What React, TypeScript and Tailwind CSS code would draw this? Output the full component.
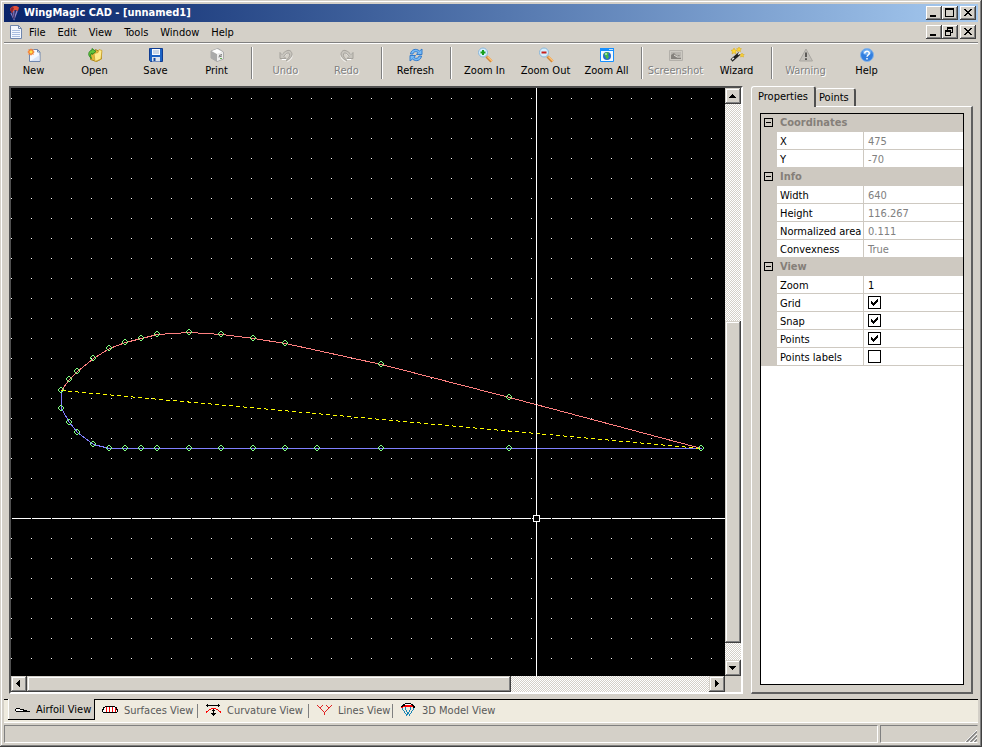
import React, { useState } from "react";
import clsx from "clsx";

type IconProps = { children: React.ReactNode; crisp?: boolean };

const Pic = ({ children, crisp }: IconProps) => (
  <svg
    width="16"
    height="16"
    viewBox="0 0 16 16"
    fill="none"
    shapeRendering={crisp ? "crispEdges" : "auto"}
    aria-hidden="true"
    className="shrink-0"
  >
    {children}
  </svg>
);

const UndoArrow = () => (
  <>
    <path d="M3 5v6.500h6.500M3.500 11C6 6 11 3 12.500 6.500S11 12 8.500 13.500" stroke="#fff" strokeWidth="1" transform="translate(1 1)" />
    <path d="M2 5.500v6h6l-2-2C8 6 11 5 11.500 7S11 11 8 13.500C14 11.500 15 7 13 4.500S7 4 4 7.500z" fill="#c8c5be" stroke="#a5a29c" strokeWidth="1" />
  </>
);

const Lens = ({ color, plus }: { color: string; plus?: boolean }) => (
  <Pic>
    <path d="M9.500 9.500l5 5" stroke="#d08838" strokeWidth="3" />
    <path d="M10.500 9.500l4.500 4.500" stroke="#ffc278" strokeWidth="1.500" />
    <circle cx="6" cy="5.500" r="4.500" fill="#d5efff" stroke="#8ab6d8" />
    <path d="M3.500 5.500h5" stroke={color} strokeWidth="2" />
    {plus && <path d="M6 3v5" stroke={color} strokeWidth="2" />}
  </Pic>
);

const icons = {
  new: (
    <Pic>
      <path d="M3.500 2.500h8l2.500 2.500v9.500H3.500z" fill="#f6f9ff" stroke="#6f86ad" />
      <path d="M11.500 2.500V5H14" stroke="#6f86ad" />
      <path d="M4.500 14L13.500 14V8z" fill="#dbe5f7" />
      <path d="M2 2l2 .8L5 1l1 1.800L8 2l-.7 2L9 5l-1.700 1L8 8l-2-.8L5 9 4 7.200 2 8l.7-2L1 5l1.700-1z" fill="#f8a060" />
      <circle cx="5" cy="5" r="2.200" fill="#ffe04a" stroke="#f06828" />
    </Pic>
  ),
  open: (
    <Pic>
      <path d="M3.500 4.500h4l1-2 3 1.500h3v8l-5 2.500-6-2z" fill="#e2b93a" stroke="#a58420" />
      <path d="M7 6.500l4-1 1-3 3 1-1 8.500-6 2.500z" fill="#ffec8c" stroke="#c9a02d" strokeWidth=".8" />
      <path d="M4.500 11.500C.5 9 1 4 5 3V1.500l4 3-4 3V6c-2 1-1.500 3-.5 5.500z" fill="#62c33b" stroke="#23801e" strokeWidth=".8" />
    </Pic>
  ),
  save: (
    <Pic>
      <path d="M1.500 1.500h13v13h-12l-1-1z" fill="#1b63c5" stroke="#103c91" />
      <path d="M4 2h8v6H4z" fill="#f8fbff" />
      <path d="M5 4h6M5 6h6" stroke="#9ab2cf" />
      <path d="M4 10h8v4.500H4z" fill="#dce4ee" />
      <path d="M5.500 11h2v3h-2z" fill="#174a9c" />
    </Pic>
  ),
  print: (
    <Pic>
      <path d="M2 4l7-2.500L14.500 5v7L8 14.500 2 11z" fill="#d7d7d7" stroke="#aaa" />
      <path d="M2 4l6 3v7.500L2 11z" fill="#aaa" />
      <path d="M3 4l5-2 5.500 3L8 7z" fill="#fff" />
      <path d="M8 7l6-2v6.500L8 14z" fill="#eee" />
      <path d="M10 8.500l3-1M9.500 10l3.500-1" stroke="#777" />
      <path d="M11 11.500h2" stroke="#61b050" />
    </Pic>
  ),
  undo: (
    <Pic>
      <UndoArrow />
    </Pic>
  ),
  redo: (
    <Pic>
      <g transform="translate(16 0) scale(-1 1)">
        <UndoArrow />
      </g>
    </Pic>
  ),
  refresh: (
    <Pic>
      <path d="M2.500 7C3 2.500 8 .8 11.500 4L14 2v5.500H8.500l1.500-2C8 4 5.500 4.500 5 7z" fill="#77baf5" stroke="#2874c9" strokeWidth=".9" />
      <path d="M13.500 9c-.5 4.500-5.500 6.200-9 3L2 14V8.500h5.500L6 10.500c2 1.500 4.500 1 5-1.500z" fill="#77baf5" stroke="#2874c9" strokeWidth=".9" />
    </Pic>
  ),
  zoomIn: <Lens color="#18a01c" plus />,
  zoomOut: <Lens color="#c8201c" />,
  zoomAll: (
    <Pic>
      <path d="M1.500 1.500h13v13h-13z" fill="#f5fbff" stroke="#168fff" />
      <path d="M1 1h14v3H1z" fill="#168fff" />
      <path d="M10 2.500h4" stroke="#b9e0ff" />
      <circle cx="8" cy="9" r="4" fill="#2869cc" />
      <path d="M5 7c1-2 4-2.500 5-1L9 8l1 2-2 2.500L6.500 10z" fill="#45b84a" />
      <circle cx="7" cy="7" r="1" fill="#b9efb5" />
    </Pic>
  ),
  screenshot: (
    <Pic>
      <path d="M1.500 3.500h13v10h-13z" fill="#ccc9c2" stroke="#b3b0aa" />
      <path d="M3 5h10v7H3z" fill="#b9b6b0" />
      <path d="M3 12V8l3-2 3 3 2-1 2 2v2z" fill="#85827d" />
      <path d="M6 8l3 2h4" stroke="#e5e2dc" />
    </Pic>
  ),
  wizard: (
    <Pic>
      <path d="M2.500 13.500l8-7" stroke="#202020" strokeWidth="3" />
      <path d="M3 12.500l2-1.500M9 7.500l2-1.500" stroke="#eee" strokeWidth="1.500" />
      <path d="M5 1l1 2 2 .3-1.500 1.400L7 7 5 5.800 3 7l.5-2.300L2 3.300 4 3zM10 0l.8 1.500 1.700.3-1.300 1.200.3 1.700L10 3.800l-1.500.9.3-1.700-1.300-1.200 1.700-.3zM13 6l.7 1.400 1.500.2-1 1 .3 1.500-1.500-.8-1.400.8.3-1.500-1-1 1.400-.2z" fill="#ffd72f" stroke="#d6a714" strokeWidth=".5" />
    </Pic>
  ),
  warning: (
    <Pic>
      <path d="M8 2l6.500 12h-13z" fill="#c4c1bb" stroke="#aaa7a1" strokeLinejoin="round" />
      <path d="M8 5.500v4.500M8 11.200v1.800" stroke="#5c5a57" strokeWidth="2" />
    </Pic>
  ),
  help: (
    <Pic>
      <circle cx="8" cy="8" r="6.500" fill="#327fe0" stroke="#86b4e8" />
      <ellipse cx="8" cy="5" rx="4.500" ry="3" fill="#6cabf1" />
      <path d="M5.700 6.500C5.700 3.500 10.300 3.500 10.300 6.300 10.300 8 8 8 8 9.800M8 11v1.500" stroke="#fff" strokeWidth="1.500" />
    </Pic>
  ),
};

type Tool = { label: string; icon: keyof typeof icons; disabled?: boolean };

const toolGroups: Tool[][] = [
  [
    { label: "New", icon: "new" },
    { label: "Open", icon: "open" },
    { label: "Save", icon: "save" },
    { label: "Print", icon: "print" },
  ],
  [
    { label: "Undo", icon: "undo", disabled: true },
    { label: "Redo", icon: "redo", disabled: true },
  ],
  [{ label: "Refresh", icon: "refresh" }],
  [
    { label: "Zoom In", icon: "zoomIn" },
    { label: "Zoom Out", icon: "zoomOut" },
    { label: "Zoom All", icon: "zoomAll" },
  ],
  [
    { label: "Screenshot", icon: "screenshot", disabled: true },
    { label: "Wizard", icon: "wizard" },
  ],
  [
    { label: "Warning", icon: "warning", disabled: true },
    { label: "Help", icon: "help" },
  ],
];

const glyphs = {
  minimize: "M4 9h6v2H4z",
  maximize: "M3 2h9v9H3zM4 4v6h7V4z",
  restore: "M5 2h6v6H9v3H3V5h2zM6 4v1h3v2h1V4zM4 7v3h4V7z",
  close:
    "M4 3h2v1H4zM10 3h2v1h-2zM5 4h2v1H5zM9 4h2v1H9zM6 5h4v1H6zM7 6h2v1H7zM6 7h4v1H6zM5 8h2v1H5zM9 8h2v1H9zM4 9h2v1H4zM10 9h2v1h-2z",
};

const CaptionButton = ({ kind, label }: { kind: keyof typeof glyphs; label: string }) => (
  <button
    aria-label={label}
    className="h-[14px] w-4 bg-[#d4d0c8] shadow-[inset_-1px_-1px_#404040,inset_1px_1px_#fff,inset_-2px_-2px_#808080]"
  >
    <svg width="16" height="14" shapeRendering="crispEdges" aria-hidden="true">
      <path d={glyphs[kind]} fillRule="evenodd" fill="#000" />
    </svg>
  </button>
);

const CaptionButtons = ({ middle }: { middle: "maximize" | "restore" }) => (
  <div className="flex pr-0.5">
    <CaptionButton kind="minimize" label="Minimize" />
    <CaptionButton kind={middle} label={middle === "maximize" ? "Maximize" : "Restore"} />
    <div className="ml-0.5 flex">
      <CaptionButton kind="close" label="Close" />
    </div>
  </div>
);

const TitleBar = () => (
  <header className="flex h-[18px] items-center bg-linear-to-r from-[#0a246a] to-[#a6caf0] pl-0.5">
    <Pic>
      <path d="M4 5c0-4 7-5.500 9-2.500L12 6l-3-1-3 3z" fill="#e0503a" />
      <path d="M4 5l2-3 2 1-2 5z" fill="#8c2430" />
      <path d="M5 8l3 6 3-8M8 6v8" stroke="#8d84c8" strokeWidth="1.500" />
      <path d="M6 8l2 6 1-8" stroke="#41366f" />
    </Pic>
    <h1 className="ml-0.5 flex-1 font-bold text-white">WingMagic CAD - [unnamed1]</h1>
    <CaptionButtons middle="maximize" />
  </header>
);

const MenuBar = () => (
  <div className="flex h-5 items-center pl-[3px]">
    <Pic>
      <path d="M3.500 1.500h8l3 3v10h-11z" fill="#f4f8ff" stroke="#6f86ad" />
      <path d="M11.500 1.500v3h3" stroke="#6f86ad" />
      <path d="M5 6.500h8M5 8.500h8M5 10.500h8M5 12.500h8" stroke="#a9bde0" />
    </Pic>
    <nav className="flex flex-1 pt-0.5">
      {["File", "Edit", "View", "Tools", "Window", "Help"].map((item) => (
        <button key={item} className="px-1.5">
          {item}
        </button>
      ))}
    </nav>
    <CaptionButtons middle="restore" />
  </div>
);

const ToolBar = () => (
  <div className="-ml-px flex h-[42px] pt-[3px]">
    {toolGroups.map((group, i) => (
      <div key={i} className="flex">
        {i > 0 && (
          <div className="w-2 pl-1">
            <div className="h-8 w-0.5 border-r border-l border-r-white border-l-[#808080]" />
          </div>
        )}
        {group.map((tool) => (
          <button
            key={tool.label}
            disabled={tool.disabled}
            className={clsx(
              "flex w-[61px] flex-col items-center gap-px whitespace-nowrap",
              tool.disabled && "text-[#808080] [text-shadow:1px_1px_#fff]"
            )}
          >
            {icons[tool.icon]}
            <span>{tool.label}</span>
          </button>
        ))}
      </div>
    ))}
  </div>
);

const upper = [
  [50, 302], [58, 291], [66, 283], [82, 270], [98, 260], [114, 254], [130, 250], [146, 246],
  [178, 244], [210, 246], [242, 250], [274, 255], [370, 276], [498, 309], [690, 360],
];
const lower = [
  [50, 302], [50, 320], [58, 334], [66, 344], [82, 356], [98, 360], [114, 360], [130, 360], [146, 360],
  [178, 360], [210, 360], [242, 360], [274, 360], [306, 360], [370, 360], [498, 360], [690, 360],
];

const toPolyline = (points: number[][]) => points.map(([x, y]) => `${x},${y}`).join(" ");

const AirfoilCanvas = ({ grid, markers }: { grid: boolean; markers: boolean }) => (
  <svg className="h-full w-full bg-black" shapeRendering="crispEdges" role="img" aria-label="Airfoil">
    <defs>
      <pattern id="dots" width="20" height="20" y="10" patternUnits="userSpaceOnUse">
        <rect width="1" height="1" fill="#fff" />
      </pattern>
    </defs>
    {grid && <rect width="100%" height="100%" fill="url(#dots)" />}
    <g fill="none" transform="translate(.5 .5)">
      <polyline points={toPolyline(upper)} stroke="#ff8080" />
      <polyline points={toPolyline(lower)} stroke="#8080ff" />
      <path d="M50 302L690 360" stroke="#ffff00" strokeDasharray="4 3" />
    </g>
    {/* crosshair, broken where it runs over the grid dots */}
    <line x1="525.5" y1="0" x2="525.5" y2="100%" stroke="#fff" />
    <rect y="430" width="100%" height="1" fill="#fff" />
    {Array.from({ length: 60 }, (_, i) => (
      <rect key={i} x={i * 20} y="430" width="1" height="1" fill="#000" />
    ))}
    <rect x="522.5" y="427.5" width="6" height="6" fill="#000" stroke="#fff" />
    {markers &&
      [...upper, ...lower.slice(1)].map(([x, y], i) => (
        <path
          key={i}
          transform={`translate(${x - 3} ${y - 3})`}
          d="M2 0h2v1H2zM1 1h1v1H1zM4 1h1v1H4zM0 2h1v2H0zM5 2h1v2H5zM1 4h1v1H1zM4 4h1v1H4zM2 5h2v1H2z"
          fill="#80ff80"
        />
      ))}
  </svg>
);

const raised =
  "shrink-0 bg-[#d4d0c8] shadow-[inset_-1px_-1px_#404040,inset_1px_1px_#d4d0c8,inset_-2px_-2px_#808080,inset_2px_2px_#fff]";
const track = "bg-[conic-gradient(#fff_25%,#d4d0c8_0_50%,#fff_0_75%,#d4d0c8_0)] bg-size-[2px_2px]";

const ScrollArrow = ({ d, label }: { d: string; label: string }) => (
  <button aria-label={label} className={clsx(raised, "size-4")}>
    <svg width="16" height="16" shapeRendering="crispEdges" aria-hidden="true">
      <path d={d} fill="#000" />
    </svg>
  </button>
);

const DrawingPane = ({ grid, markers }: { grid: boolean; markers: boolean }) => (
  <section className="grid min-w-0 flex-1 grid-cols-[minmax(0,1fr)_16px] grid-rows-[minmax(0,1fr)_16px] border-2 border-t-[#505050] border-r-white border-b-white border-l-[#505050]">
    <AirfoilCanvas grid={grid} markers={markers} />
    <div className={clsx("flex flex-col", track)}>
      <ScrollArrow label="Scroll up" d="M7 6h1v1h1v1h1v1h1v1H4V9h1V8h1V7h1z" />
      <div className="grow-[217]" />
      <div className={clsx(raised, "grow-[322]")} />
      <div className="grow-[17]" />
      <ScrollArrow label="Scroll down" d="M4 6h7v1h-1v1H9v1H8v1H7V9H6V8H5V7H4z" />
    </div>
    <div className={clsx("flex", track)}>
      <ScrollArrow label="Scroll left" d="M9 4v7H8v-1H7V9H6V8H5V7h1V6h1V5h1V4z" />
      <div className={clsx(raised, "grow-[484]")} />
      <div className="grow-[198]" />
      <ScrollArrow label="Scroll right" d="M6 4h1v1h1v1h1v1h1v1H9v1H8v1H7v1H6z" />
    </div>
  </section>
);

type Row = { name: string; value?: string; editable?: boolean; flag?: string };

const sections: { title: string; rows: Row[] }[] = [
  {
    title: "Coordinates",
    rows: [
      { name: "X", value: "475" },
      { name: "Y", value: "-70" },
    ],
  },
  {
    title: "Info",
    rows: [
      { name: "Width", value: "640" },
      { name: "Height", value: "116.267" },
      { name: "Normalized area", value: "0.111" },
      { name: "Convexness", value: "True" },
    ],
  },
  {
    title: "View",
    rows: [
      { name: "Zoom", value: "1", editable: true },
      { name: "Grid", flag: "grid" },
      { name: "Snap", flag: "snap" },
      { name: "Points", flag: "points" },
      { name: "Points labels", flag: "labels" },
    ],
  },
];

type Flags = Record<string, boolean>;
type PropertiesProps = { flags: Flags; onToggle: (flag: string) => void };

const PropertyValue = ({ row, flags, onToggle }: PropertiesProps & { row: Row }) => {
  if (row.flag) {
    return (
      <span className="relative block size-[13px]">
        <input
          id={row.flag}
          type="checkbox"
          checked={flags[row.flag]}
          onChange={() => onToggle(row.flag as string)}
          className="block size-[13px] appearance-none border border-black bg-white"
        />
        {flags[row.flag] && (
          <svg width="13" height="13" shapeRendering="crispEdges" className="pointer-events-none absolute inset-0" aria-hidden="true">
            <path d="M3 5h1v1h1v1h1V6h1V5h1V4h1V3h1v3H9v1H8v1H7v1H6v1H5V9H4V8H3z" fill="#000" />
          </svg>
        )}
      </span>
    );
  }
  if (row.editable) {
    return <input id={row.name} defaultValue={row.value} className="block h-4 w-full bg-transparent pt-0.5 outline-none" />;
  }
  return <span className="block pt-0.5 text-[#808080]">{row.value}</span>;
};

const PropertyGrid = ({ flags, onToggle }: PropertiesProps) => (
  <div className="flex-1 border border-black bg-white">
    <table className="w-full table-fixed border-separate border-spacing-0">
      <colgroup>
        <col className="w-4" />
        <col className="w-[87px]" />
        <col />
      </colgroup>
      {sections.map((section) => (
        <tbody key={section.title}>
          <tr className="h-[18px] bg-[#cec9c1]">
            <td className="p-0 pb-px pl-[3px]">
              <button aria-label={`Collapse ${section.title}`} className="flex size-[9px] items-center justify-center border border-black">
                <span className="h-px w-[5px] bg-black" />
              </button>
            </td>
            <th colSpan={2} scope="colgroup" className="p-0 pl-[3px] text-left font-bold text-[#857f79]">
              {section.title}
            </th>
          </tr>
          {section.rows.map((row) => (
            <tr key={row.name} className="h-[18px]">
              <td className="bg-[#cec9c1] p-0" />
              <th scope="row" className="border-r border-b border-[#cec9c1] p-0 pt-0.5 pl-[3px] text-left font-normal whitespace-nowrap">
                <label htmlFor={row.flag ?? (row.editable ? row.name : undefined)}>{row.name}</label>
              </th>
              <td className="border-b border-[#cec9c1] p-0 pl-1">
                <PropertyValue row={row} flags={flags} onToggle={onToggle} />
              </td>
            </tr>
          ))}
        </tbody>
      ))}
    </table>
  </div>
);

const SidePanel = ({ flags, onToggle }: PropertiesProps) => (
  <aside className="flex w-[222px] shrink-0 flex-col">
    <div role="tablist" className="flex h-5 items-end">
      <button
        role="tab"
        aria-selected="true"
        className="relative -mb-px h-[21px] w-[65px] rounded-t-[3px] border-t border-r-2 border-l border-t-white border-r-[#505050] border-l-white bg-[#d4d0c8] pl-1.5 text-left"
      >
        Properties
      </button>
      <button
        role="tab"
        aria-selected="false"
        className="h-[18px] w-10 rounded-t-[3px] border-t border-r-2 border-t-white border-r-[#505050] pt-px pl-[3px] text-left"
      >
        Points
      </button>
    </div>
    <div className="flex flex-1 border-t border-r-2 border-b-2 border-l border-t-white border-r-[#606060] border-b-[#606060] border-l-white px-2 pt-1.5 pr-[7px] pb-[7px]">
      <PropertyGrid flags={flags} onToggle={onToggle} />
    </div>
  </aside>
);

const views = [
  {
    label: "Airfoil View",
    width: "w-[87px]",
    icon: (
      <>
        <path d="M2 6h4v1h4v1h3v1h3v1H2V9H1V7h1z" fill="#000" />
        <path d="M2 7h4v1h3v1H2z" fill="#fff" />
      </>
    ),
  },
  {
    label: "Surfaces View",
    width: "w-[103px]",
    icon: (
      <>
        <path d="M3 4h10v1h2v2h1v3h-1v1H1v-1H0V7h1V5h2z" fill="#000" />
        <path d="M3 5h10v1h1v2h1v2H1V8h1V6h1z" fill="#fff" />
        <path d="M4 5h1v5H4zM7 5h1v5H7zM10 5h1v5h-1zM13 6h1v4h-1z" fill="#f00" />
      </>
    ),
  },
  {
    label: "Curvature View",
    width: "w-[111px]",
    icon: (
      <>
        <path d="M1 9h2v1H1zM3 8h1v1H3zM4 7h2v1H4zM6 6h5v1H6zM11 7h2v1h-2zM13 8h1v1h-1zM14 9h2v1h-2zM1 10h1v1H1zM15 10h1v1h-1z" fill="#f00" />
        <path d="M1 3h14v1H1zM2 2h1v3H2zM13 2h1v3h-1zM8 7h1v7H8zM7 8h3v1H7zM6 11h5v1H6zM7 12h3v1H7z" fill="#000" />
      </>
    ),
  },
  {
    label: "Lines View",
    width: "w-[84px]",
    icon: (
      <path
        d="M1 3h1v1H1zM2 4h1v1H2zM3 5h1v1H3zM4 6h1v1H4zM5 7h1v1H5zM6 8h1v1H6zM7 9h1v1H7zM8 10h1v3H8zM9 9h1v1H9zM10 8h1v1h-1zM11 7h1v1h-1zM12 6h1v1h-1zM13 5h1v1h-1zM14 4h1v1h-1zM15 3h1v1h-1zM6 3h1v1H6zM5 4h1v1H5zM4 5h1v1H4zM10 3h1v1h-1zM11 4h1v1h-1zM12 5h1v1h-1z"
        fill="#e02020"
      />
    ),
  },
  {
    label: "3D Model View",
    width: "w-[108px]",
    icon: (
      <>
        <path d="M5 1h6v1h2v1h1v1h1v2h-2V5H3v1H1V4h1V3h1V2h2z" fill="#000" />
        <path d="M5 3h7v1h1v1H3V4h2zM1 5h2v1H1z" fill="#f00" />
        <path d="M5 2h6v1H5z" fill="#fff" />
        <path d="M2 6h1v2H2zM3 8h1v1H3zM4 9h1v2H4zM5 11h1v1H5zM6 12h1v2H6zM7 10h1v3H7zM5 5h1v3H5zM6 8h1v2H6zM10 5h1v3h-1zM9 8h1v2H9zM8 10h1v2H8zM13 6h1v2h-1zM12 8h1v1h-1zM11 9h1v2h-1zM10 11h1v1h-1zM9 12h1v2H9z" fill="#1684b4" />
      </>
    ),
  },
];

const ViewTabs = () => {
  const [active, setActive] = useState(0);
  return (
    <div role="tablist" className="flex h-6 items-start border-b border-white bg-[#efebdf] pl-1 shadow-[inset_0_1px_#000]">
      {views.map((view, i) => (
        <button
          key={view.label}
          role="tab"
          aria-selected={i === active}
          onClick={() => setActive(i)}
          className={clsx(
            "flex shrink-0 items-center gap-1.5 whitespace-nowrap",
            view.width,
            i === active
              ? "h-[21px] border-r border-b border-black bg-[#d4d0c8] pt-px pl-1.5 shadow-[inset_1px_0_#fff]"
              : "h-[22px] pl-[7px] text-[#595959]",
            i !== active &&
              i < views.length - 1 &&
              "bg-[linear-gradient(#808080,#808080)] bg-size-[1px_14px] bg-position-[right_5px] bg-no-repeat"
          )}
        >
          <Pic crisp>{view.icon}</Pic>
          <span className="pt-px">{view.label}</span>
        </button>
      ))}
    </div>
  );
};

const StatusBar = () => (
  <footer className="flex h-[18px] gap-0.5">
    <div className="flex-1 border border-t-[#808080] border-r-white border-b-white border-l-[#808080]" />
    <div className="flex w-[98px] items-end justify-end border border-t-[#808080] border-r-transparent border-b-white border-l-[#808080]">
      <svg width="13" height="13" aria-hidden="true">
        <path d="M1 13L13 1M5 13l8-8M9 13l4-4" stroke="#fff" />
        <path d="M2.500 13L13 2.500M6.500 13L13 6.500M10.500 13l2.500-2.500" stroke="#808080" strokeWidth="1.500" />
      </svg>
    </div>
  </footer>
);

export default function App() {
  const [flags, setFlags] = useState<Flags>({ grid: true, snap: true, points: true, labels: false });
  const toggle = (flag: string) => setFlags((prev) => ({ ...prev, [flag]: !prev[flag] }));

  return (
    <div className="flex h-screen flex-col bg-[#d4d0c8] p-1 font-['DejaVu_Sans_Condensed','DejaVu_Sans',sans-serif] text-[11px] leading-[14px] text-black shadow-[inset_-1px_-1px_#404040,inset_1px_1px_#d4d0c8,inset_-2px_-2px_#808080,inset_2px_2px_#fff]">
      <TitleBar />
      <MenuBar />
      <div className="h-0.5 border-t border-b border-t-[#808080] border-b-white" />
      <ToolBar />
      <main className="flex min-h-0 flex-1 gap-2 px-[5px] pb-[5px]">
        <DrawingPane grid={flags.grid} markers={flags.points} />
        <SidePanel flags={flags} onToggle={toggle} />
      </main>
      <ViewTabs />
      <div className="h-0.5" />
      <StatusBar />
    </div>
  );
}
